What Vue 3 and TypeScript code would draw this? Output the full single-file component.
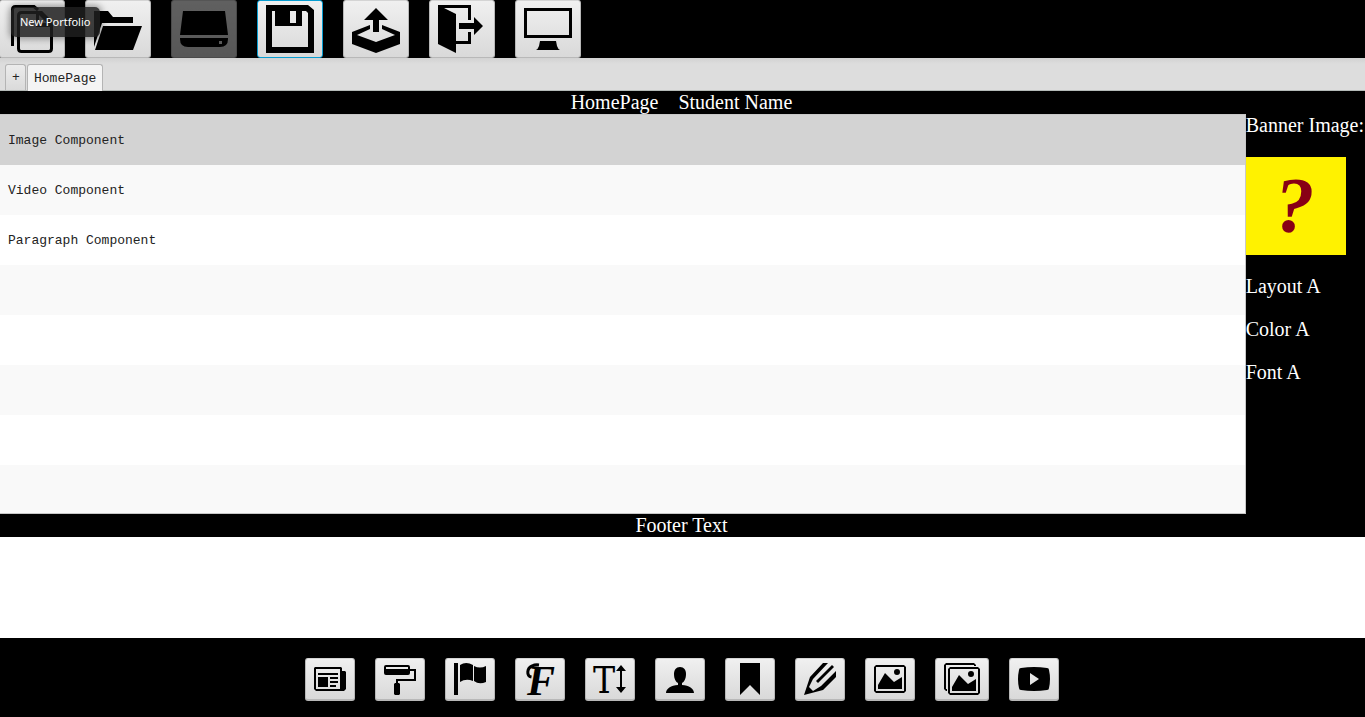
<script setup lang="ts">
import { ref } from 'vue'

interface Glyph {
  text: string
  x: number
  y: number
  size: number
  kind: 'script' | 'slab'
}

interface Tool {
  label: string
  width: number
  height: number
  fill?: string
  line?: string
  lineWidth?: number
  glyph?: Glyph
  disabled?: boolean
  focused?: boolean
}

const fileTools: Tool[] = [
  {
    label: 'New Portfolio', width: 48, height: 48, lineWidth: 3,
    fill: 'M28 6H34L45 17V22H28Z M31 10V18H39Z',
    line: 'M4.500 41V4.500Q4.500 1.500 7.500 1.500H26L30 5M13.500 7.500H33L43.500 18V43.500Q43.500 46.500 40.500 46.500H13.500Q10.500 46.500 10.500 43.500V10.500Q10.500 7.500 13.500 7.500Z'
  },
  {
    label: 'Open Portfolio', width: 48, height: 48,
    fill: 'M0 6H14L19 12H39V18H8L0 42Z M9 21H48L39 45H1Z'
  },
  {
    label: 'Save Portfolio', width: 48, height: 48, disabled: true,
    fill: 'M3 6H45L48 30H0Z M0 33H48V34Q48 42 40 42H8Q0 42 0 34Z M39 36V39H42V36Z'
  },
  {
    label: 'Save As', width: 48, height: 48, focused: true,
    fill: 'M0 0H42L48 5V48H0Z M6 6V42H42V8L40 6H36V21H9V6Z M24 6V18H30V6Z'
  },
  {
    label: 'Export Portfolio', width: 48, height: 48,
    fill: 'M24 3L36 15H27V27H21V15H12Z M0 27L18 20V24L5 30L24 37L43 30L30 24V20L48 27V39L24 48L0 39Z'
  },
  {
    label: 'Exit', width: 48, height: 48,
    fill: 'M0 0H33V15H30V3H6L18 9V36H30V27H33V39H18V48L0 39Z M21 18H36V12L45 21L36 30V24H21Z'
  },
  {
    label: 'View Site', width: 48, height: 48,
    fill: 'M0 3H48V33H0Z M3 6V30H45V6Z M16 36H32L33 41Q34 44 36 45H12Q14 44 15 41Z'
  }
]

const editTools: Tool[] = [
  {
    label: 'Layout', width: 32, height: 32,
    fill: 'M1 4H27L28 5V8H31L32 9V26L30 28H2L0 26V5Z M2 6V26H26V6Z M4 10H24V12H4Z M4 14H14V24H4Z M16 14H24V16H16Z M16 18H24V20H16Z M16 22H22V24H16Z'
  },
  {
    label: 'Color', width: 32, height: 32,
    fill: 'M2 2H24Q26 2 26 4V6H32V18H14V20H15L16 21V31L15 32H11L10 31V21L11 20H12V16H30V8H26V10Q26 12 24 12H2Q0 12 0 10V4Q0 2 2 2Z M2 4V6H24V4Z'
  },
  {
    label: 'Banner', width: 32, height: 32,
    fill: 'M0 0H4V32H0Z M6 2Q12 -2 19 2V18Q12 15 6 19Z M20 3Q26 6 32 3V19Q25 22 20 18Z'
  },
  {
    label: 'Font', width: 32, height: 32, lineWidth: 3,
    line: 'M7.500 14C2 13 3 5 8 3Q11 1.500 15 2',
    glyph: { text: 'F', x: 3, y: 32, size: 42, kind: 'script' }
  },
  {
    label: 'Text Size', width: 32, height: 32,
    fill: 'M27 2L32 8H28V24H32L27 30L22 24H26V8H22Z',
    glyph: { text: 'T', x: -1, y: 30, size: 37, kind: 'slab' }
  },
  {
    label: 'Student Name', width: 32, height: 32,
    fill: 'M16 4C20 4 22 7 22 11C22 16 20 19 18 20V22C25 22 30 26 30 30H2C2 26 7 22 14 22V20C12 19 10 16 10 11C10 7 12 4 16 4Z'
  },
  {
    label: 'Page Title', width: 32, height: 32,
    fill: 'M6 0H26V32L16 22L6 32Z'
  },
  {
    label: 'Footer', width: 32, height: 32,
    fill: 'M0 32L6 14L19 0H24L9 16L5 24L9 28L17 23L32 8V14L19 27Z M12 18L28 2L30 4L14 20Z'
  },
  {
    label: 'Image', width: 32, height: 32,
    fill: 'M2 2H30L32 4V28L30 30H2L0 28V4Z M2 4V28H30V4Z M4 22L11 10L20 19L28 14V26H4Z M23 6A3 3 0 0 1 23 12A3 3 0 0 1 23 6Z'
  },
  {
    label: 'Slide Show', width: 36, height: 32,
    fill: 'M2 0H30L32 2V3H30V2H2V26H3V28H2L0 26V2Z M6 4H34L36 6V30L34 32H6L4 30V6Z M6 6V30H34V6Z M8 24L15 12L24 21L32 16V28H8Z M27 8A3 3 0 0 1 27 14A3 3 0 0 1 27 8Z'
  },
  {
    label: 'Video', width: 32, height: 32,
    fill: 'M3 5Q16 3 29 5Q31 5 31 7Q33 16 31 25Q31 27 29 27Q16 29 3 27Q1 27 1 25Q-1 16 1 7Q1 5 3 5Z M12 10V22L21 16Z'
  }
]

const toolbars = [
  { name: 'file', label: 'File tools', tools: fileTools },
  { name: 'edit', label: 'Page tools', tools: editTools }
]

const components = ['Image Component', 'Video Component', 'Paragraph Component']
const rows = Array.from({ length: 8 }, (_, i) => components[i] ?? '')
const settings = ['Layout A', 'Color A', 'Font A']
const selected = ref(0)
</script>

<template>
  <div class="page">
    <template v-for="bar in toolbars" :key="bar.name">
      <div :class="['toolbar', bar.name]" role="toolbar" :aria-label="bar.label">
        <button
          v-for="tool in bar.tools"
          :key="tool.label"
          type="button"
          :class="['tool', { focused: tool.focused }]"
          :disabled="tool.disabled"
          :aria-label="tool.label"
        >
          <svg :width="tool.width" :height="tool.height" :viewBox="`0 0 ${tool.width} ${tool.height}`" aria-hidden="true">
            <path v-if="tool.fill" :d="tool.fill" fill-rule="evenodd" />
            <path v-if="tool.line" :d="tool.line" class="line" :stroke-width="tool.lineWidth" />
            <text
              v-if="tool.glyph"
              :x="tool.glyph.x"
              :y="tool.glyph.y"
              :font-size="tool.glyph.size"
              :class="tool.glyph.kind"
            >{{ tool.glyph.text }}</text>
          </svg>
        </button>
        <div v-if="bar.name === 'file'" class="tooltip" role="tooltip">New Portfolio</div>
      </div>

      <template v-if="bar.name === 'file'">
        <nav class="tabs" aria-label="Pages">
          <button type="button" class="tab add">+</button>
          <button type="button" class="tab active">HomePage</button>
        </nav>
        <header class="heading"><span>HomePage</span><span>Student Name</span></header>
        <main class="workspace">
          <ul class="list">
            <li v-for="(row, i) in rows" :key="i">
              <button v-if="row" type="button" :class="['row', { selected: selected === i }]" @click="selected = i">{{ row }}</button>
            </li>
          </ul>
          <aside class="side">
            <span>Banner Image:</span>
            <svg class="banner" width="100" height="98" viewBox="0 0 100 98" role="img" aria-label="Banner">
              <text x="29" y="74" font-size="79">?</text>
            </svg>
            <span v-for="item in settings" :key="item">{{ item }}</span>
          </aside>
        </main>
        <footer class="footer">Footer Text</footer>
        <div class="blank"></div>
      </template>
    </template>
  </div>
</template>

<style>
body {
  margin: 0;
}
</style>

<style scoped>
.page {
  display: flex;
  flex-direction: column;
  min-height: 100vh;
  overflow: hidden;
  background: #000;
  color: #fff;
  font-family: "Liberation Serif", "Times New Roman", serif;
  font-size: 20px;
  line-height: 23px;
}

button {
  box-sizing: border-box;
  margin: 0;
  font-family: "Liberation Mono", "Courier New", monospace;
  font-size: 13px;
  color: #222;
  cursor: pointer;
}

.toolbar {
  position: relative;
  display: flex;
  gap: 20px;
}

.toolbar.file {
  margin-left: -1px;
}

.toolbar.edit {
  justify-content: center;
  padding: 20px 2px 16px 0;
}

.tool {
  flex: none;
  padding: 4px 8px;
  border: 1px solid #b8b8b8;
  border-top-color: #d4d4d4;
  border-radius: 3px;
  background: linear-gradient(#f0f0f0, #d9d9d9);
  color: #000;
}

.edit .tool {
  border-bottom-width: 2px;
}

.tool svg {
  display: block;
  overflow: visible;
}

.tool.focused {
  border-color: #079dd1;
}

.tool:disabled {
  opacity: 0.4;
}

.line {
  fill: none;
  stroke: #000;
}

.script {
  font-family: "Liberation Serif", serif;
  font-style: italic;
  font-weight: bold;
}

.slab {
  font-family: "DejaVu Serif Condensed", "DejaVu Serif", serif;
}

.tooltip {
  position: absolute;
  top: 7px;
  left: 12px;
  padding: 5px 10px 5px 9px;
  border-radius: 5px;
  background: rgba(30, 30, 30, 0.85);
  box-shadow: 0 0 6px 2px rgba(0, 0, 0, 0.35);
  font-family: "Noto Sans", sans-serif;
  font-size: 11px;
  line-height: 20px;
  white-space: nowrap;
}

.tabs {
  display: flex;
  align-items: flex-end;
  gap: 1px;
  box-sizing: border-box;
  height: 33px;
  padding: 0 5px;
  border-bottom: 1px solid #b4bab7;
  background: linear-gradient(#d2d2d2, #dddddd 6px);
}

.tab {
  height: 26px;
  padding: 0 6px;
  border: 1px solid #b4b4b4;
  border-bottom: 0;
  border-radius: 3px 3px 0 0;
  background: linear-gradient(#ececec, #dadada);
}

.tab.add {
  width: 21px;
}

.tab.active {
  height: 27px;
  margin-bottom: -1px;
  background: #f4f4f4;
}

.heading {
  display: flex;
  justify-content: center;
  gap: 20px;
  padding-right: 2px;
}

.workspace {
  display: grid;
  grid-template-columns: 1fr auto;
}

.list {
  box-sizing: border-box;
  height: 400px;
  margin: 0;
  padding: 0;
  overflow: hidden;
  border: 1px solid #c8c8c8;
  border-left: 0;
  background: #fff;
  list-style: none;
}

.list li {
  height: 50px;
}

.list li:nth-child(even) {
  background: #f9f9f9;
}

.row {
  display: block;
  width: 100%;
  height: 100%;
  padding: 0 8px;
  border: 0;
  background: transparent;
  text-align: left;
}

.row.selected {
  background: #d3d3d3;
}

.side {
  display: flex;
  flex-direction: column;
  gap: 20px;
  padding-right: 1px;
}

.banner {
  display: block;
  background: #fff200;
}

.banner text {
  fill: #880015;
  font-family: "Liberation Serif", serif;
  font-style: italic;
  font-weight: bold;
}

.footer {
  padding-right: 2px;
  text-align: center;
}

.blank {
  flex: 1;
  min-height: 100px;
  background: #fff;
}
</style>
